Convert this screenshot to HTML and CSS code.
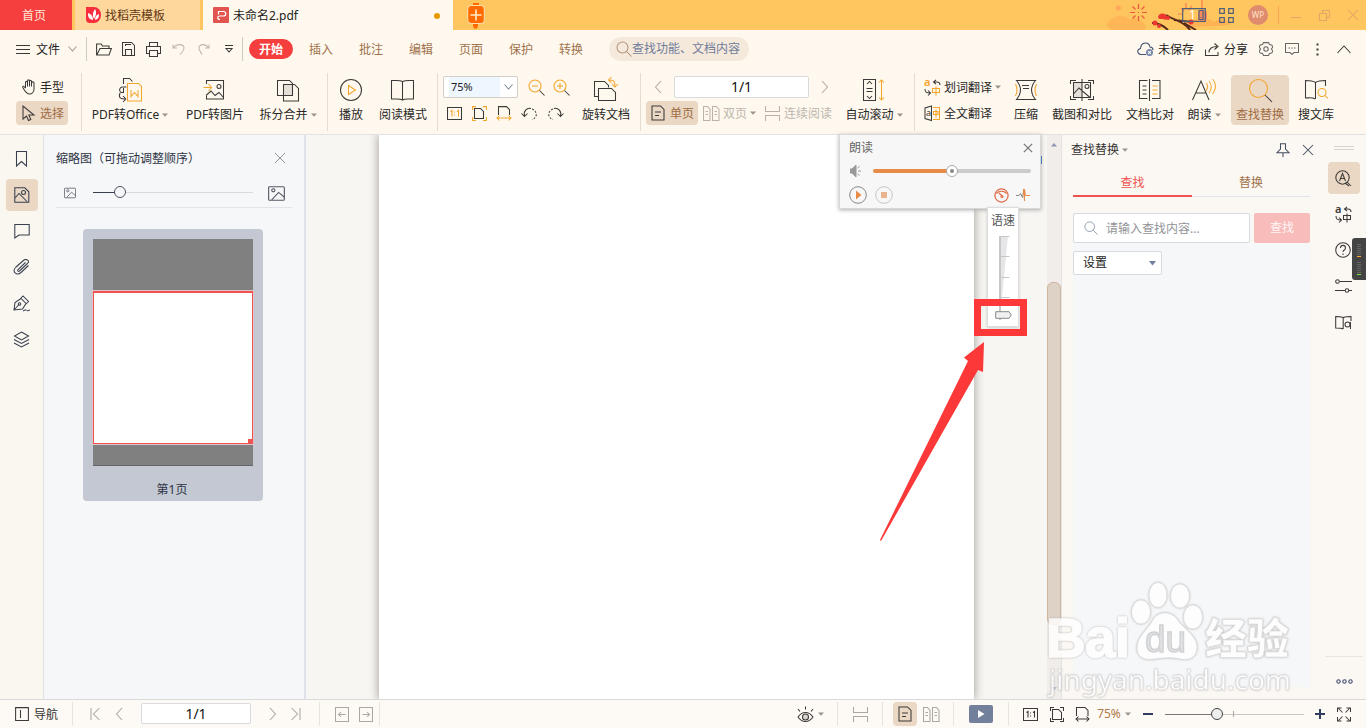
FILE: index.html
```html
<!DOCTYPE html>
<html lang="zh-CN">
<head>
<meta charset="utf-8">
<title>未命名2.pdf</title>
<link rel="stylesheet" href="styles.css">
</head>
<body>
<svg class="defs" aria-hidden="true">
  <symbol id="down" viewBox="0 0 6 4"><path d="M0 .5h6L3 3.8z" fill="#9a948c"/></symbol>
  <symbol id="doc" viewBox="0 0 14 16"><path d="M1 1h8.500l3.500 3.500V15H1zM4 7h6M4 10.500h4"/></symbol>
  <symbol id="docs" viewBox="0 0 17 15"><path d="M.5.5h4l2.500 3v11H.5zM9.500.5h4l2.500 3v11H9.500zM2.500 5.500h2.500M2.500 8.500h2.500M11.500 5.500H14M11.500 8.500H14"/></symbol>
  <symbol id="cont" viewBox="0 0 15 15"><path d="M.5 0v5.500h14V0M.5 15V9.500h14V15"/></symbol>
  <symbol id="picture" viewBox="0 0 16 14"><rect x=".6" y=".6" width="14.800" height="12.800" rx="1"/><circle cx="5" cy="4" r="1.500"/><path d="M3.500 13l6.500-7 5.500 4.500"/></symbol>
  <symbol id="left" viewBox="0 0 8 14"><path d="M7 1L1.500 7 7 13"/></symbol>
  <symbol id="right" viewBox="0 0 8 14"><path d="M1 1l5.500 6L1 13"/></symbol>
  <symbol id="close" viewBox="0 0 12 12"><path d="M1 1l10 10M11 1L1 11"/></symbol>
  <symbol id="lens" viewBox="0 0 16 16"><circle cx="6.500" cy="6.500" r="5.500"/><path d="M10.500 10.500l5 5"/></symbol>
</svg>

<header class="titlebar">
  <div class="tab home"><span>首页</span></div>
  <div class="tab template">
    <svg width="15" height="16"><path d="M0 0h8a7 8 0 0 1 0 16H4a4 4 0 0 1-4-4z" fill="#f52d3c"/><path d="M7 13C2 12 2 9 2 6c3 1 5 3 5 7zM8 12C6 8 7 5 9 2c2 3 1 7-1 10zM9 13c0-3 1-5 4-6 0 4-1 5-4 6z" fill="#fff"/></svg>
    <span>找稻壳模板</span>
  </div>
  <div class="tab current">
    <svg width="16" height="16"><rect width="16" height="16" rx="1" fill="#e25450"/><path d="M5.500 7.500V4.500h5c3 0 3 4.500 0 4.500H7c-3 0-3 3.500 0 3.500" fill="none" stroke="#fff" stroke-width="1.200"/></svg>
    <span>未命名2.pdf</span><i class="dirty"></i>
  </div>
  <svg class="newtab" width="18" height="28"><path d="M6 3h6M6 24h5" stroke="#ff6b00" stroke-width="2"/><rect x=".7" y="4.500" width="16.600" height="18" rx="3.500" fill="#ff6b00" stroke="#ffe0a8"/><path d="M9 8.500v11M3.500 14h11" stroke="#ffecc8" stroke-width="1.600"/><circle cx="8.500" cy="25.500" r="2.200" fill="#ff6b00" stroke="none"/></svg>
  <div class="festival">
    <svg width="136" height="30"><path d="M0 25c7-10 17-12 24-5 7-4 11 0 15 5 3 4 0 5-3 5H5z" fill="#ffb255" opacity=".8"/><path d="M80 28c8-12 20-12 28-6 6-4 13-3 17 2-7 3-25 1-45 4z" fill="#ffad51" opacity=".8"/><g stroke="#ed5842" stroke-width="1.200" fill="none"><path d="M32.500 4v5M32.500 16v5M24 12.500h5M36 12.500h5M26.500 6.500l3 3M35.500 15.500l3 3M38.500 6.500l-3 3M29.500 15.500l-3 3M32 12.500h1"/><path d="M9 8h7M12.500 5v6M10 5.500l5 5M15 5.500l-5 5" stroke="#ff985b" stroke-width=".8"/><path d="M75 8l3 3M80 3v5M86 6l-3 4M72 14h5M96 0v12" stroke="#ff7b50"/></g><path d="M46 23c7 0 11 2 16 7M60 15c9 6 18 6 24 15M68 20l18 2M78 23l12 7" stroke="#582b1d" stroke-width="2" fill="none"/><g fill="#eb3632"><path d="M52 17c1-5 8-4 9-1 3 2-1 5-4 3-3 0-5 0-5-2z"/><circle cx="62" cy="18" r="2"/><circle cx="49" cy="23" r="2.500"/><circle cx="85" cy="22" r="2.500"/><circle cx="53" cy="26" r="2"/></g><rect x="92" y="10" width="9" height="11" rx="4" fill="#ff8a5c"/></svg>
  </div>
  <div class="windowbox"><span>1</span><svg width="24" height="14"><path d="M.7.7h22.600v12.600H.7zM17 2.500h4v9h-4zM18.500 9.500h1"/></svg></div>
  <svg class="apps" width="15" height="15"><path d="M.7.7h4.600v4.600H.7zM9.700.7h4.600v4.600H9.700zM.7 9.700h4.600v4.600H.7zM9.700 9.700h4.600v4.600H9.700z"/></svg>
  <div class="avatar">WP</div><i class="tline"></i>
  <svg class="wmin" width="10" height="12"><path d="M0 8.500h10"/></svg>
  <svg class="wrest" width="11" height="12"><path d="M.5 4.500h7v7h-7zM3.500 4V1.500h7v7H8"/></svg>
  <svg class="wclose" width="12" height="12"><use href="#close"/></svg>
</header>

<nav class="menubar">
  <div class="file"><svg width="14" height="11"><path d="M0 1.500h14M0 5.500h14M0 9.500h14"/></svg><span>文件</span><svg class="muted" width="9" height="6"><path d="M.5.5l4 4.500 4-4.500"/></svg></div>
  <i class="vline"></i>
  <svg width="16" height="13"><path d="M.6 12V1h4.500l1.400 2h6.500v2.500M.8 12L4 5.500h11.400L13 12z"/></svg>
  <svg width="13" height="14"><path d="M.5.5h9l3 3v10H.5zM3.500 4V2.500H9M3.500 13V7.500h6V13"/></svg>
  <svg width="15" height="15"><path d="M3.500 4.500v-4h8v4M3.500 11.500h-3v-7h14v7h-3M3.500 8.500h8v6h-8z"/></svg>
  <svg class="faint" width="13" height="12"><path d="M1 1.500V5h4M1.500 5C4 .5 12 .5 12 5c0 3-2 4-4 6.500"/></svg>
  <svg class="faint" width="12" height="12"><path d="M11 1.500V5H7M10.500 5C8 .5 1 .5 1 5c0 3 2 4 3 6.500"/></svg>
  <svg width="8" height="8"><path d="M0 .5h8M1 3.500l3 3.500 3-3.500z"/></svg>
  <i class="vline start"></i>
  <b class="pill">开始</b>
  <span>插入</span><span>批注</span><span>编辑</span><span>页面</span><span>保护</span><span>转换</span>
  <div class="cmdsearch"><svg width="16" height="16"><use href="#lens"/></svg>查找功能、文档内容</div>
  <em></em>
  <div class="pair cloud"><svg width="17" height="14"><path d="M9 12.500H4c-4-.5-4.500-5-.5-6C4-.5 12-.5 13 5c2 .2 3 1.500 3 3" stroke="#405070"/><circle cx="12.500" cy="10.500" r="3.500" fill="#7888a8" stroke="none"/><path d="M11.200 9.200l2.600 2.600M13.800 9.200l-2.600 2.600" stroke="#fff"/></svg><span>未保存</span></div>
  <div class="pair share"><svg width="15" height="13"><path d="M.5 6.500v6h12.500V9M4 9.500c0-4 3-6 8-6M9.500.5l3.500 3-3.500 3"/></svg><span>分享</span></div>
  <svg width="14" height="14"><path d="M4.500.6h5l1 2 2.300.4 1 2-1.400 2 1.400 2-1 2-2.300.4-1 2h-5l-1-2-2.300-.4-1-2L1.600 7 .2 5l1-2 2.300-.4z" stroke="#666"/><circle cx="7" cy="7" r="2.200" stroke="#666"/></svg>
  <svg width="14" height="12"><path d="M.5.5h13v9H9l-2 1.900-2-1.900H.5zM3.500 5h1.500M6.300 5H7.700M9 5h1.500" stroke="#666"/></svg>
  <svg width="3" height="13"><path d="M1.500 .5v2M1.500 5.500v2M1.500 10.500v2" stroke-width="2"/></svg>
  <svg width="14" height="9"><path d="M.5 8L7 1l6.500 7"/></svg>
</nav>

<section class="toolbar">
  <div class="modes">
    <div><svg width="14" height="16"><path d="M3.500 9V3.500c0-1.500 2-1.500 2 0V7.500M5.500 7V2c0-1.500 2-1.500 2 0v5.500M7.500 7V2.500c0-1.500 2-1.500 2 0v5M9.500 7.500V4c0-1.500 2.500-1.500 2.500 0v6c0 3-2 5-4.500 5C4 15 3 12 .8 8.500c-.5-1.500 1-1.500 1.700-.5l1 1.200"/></svg><span>手型</span></div>
    <div class="on"><svg width="14" height="17"><path d="M1 1v13l3.500-3 2 4.500 2.300-1-2-4.500H12z"/></svg><span>选择</span></div>
  </div>
  <i class="bar edge"></i>
  <div class="big"><svg width="26" height="28"><path d="M6.500 8V2.500h6l3 3M15 11H5a3 3 0 0 0-1 5.500h2.500V12M3 17c-2 5 1 6 5 6M6 20l3 3-3 3"/><path d="M9.500 7.500h12l3 3v15h-15z" fill="#fff8ee" stroke="none"/><path class="o" d="M10.500 7.500h11l3 3v14.500h-14zM14 14v6.500l3.500-4 3.500 4V14"/></svg><span>PDF转Office<svg class="dn"><use href="#down"/></svg></span></div>
  <div class="big"><svg width="26" height="28"><path d="M4.500 8V4.500h17v18.500h-17v-3M4 19.500l5-4.500 4 4.500 4-3 4.500 5"/><circle cx="17" cy="10.500" r="2"/><path class="o" d="M1.500 11.500h8M6.500 8l3 3.500-3 3.500"/></svg><span>PDF转图片</span></div>
  <div class="big"><svg width="26" height="28"><path d="M8.500 8.500h9v11h-9z" fill="#e6dfd7" stroke="none"/><path d="M2.500 4.500h12l3 3v12h-15zM8.500 8.500h11l4 4V25h-15z"/></svg><span>拆分合并<svg class="dn"><use href="#down"/></svg></span></div>
  <i class="bar"></i>
  <div class="big"><svg width="26" height="28"><circle cx="13" cy="14" r="10.500"/><path class="o" d="M10.500 9.500v9l7-4.500z"/></svg><span>播放</span></div>
  <div class="big"><svg width="26" height="28"><path d="M12.500 5.500v18M12.500 24c-2-1.500-3-1-11-1V4.500c6 0 8.500-.5 11 1 2.500-1.500 6-1 11-1V23c-8 0-9-.5-11 1z"/></svg><span>阅读模式</span></div>
  <i class="bar"></i>
  <div class="zoomgroup">
    <div class="zrow"><div class="combo"><span>75%</span><svg width="9" height="6"><path d="M.5.5l4 4.500 4-4.500"/></svg></div>
      <svg width="17" height="17"><circle class="o" cx="7" cy="7" r="6"/><path class="o" d="M4 7h6"/><path d="M11.500 11.500l5 5"/></svg>
      <svg width="17" height="17"><circle class="o" cx="7" cy="7" r="6"/><path class="o" d="M4 7h6M7 4v6"/><path d="M11.500 11.500l5 5"/></svg></div>
    <div class="zicons">
      <svg width="16" height="14"><path d="M.5.5h14v12H.5z"/><path class="o" d="M3.500 4.500l1.500-1v6M7.500 4.500v1M7.500 7.500v1M10 4.500l1.500-1v6"/></svg>
      <svg width="15" height="15"><path d="M2.500 2.500h6l3 3v7h-9z"/><path class="o" d="M.6 4V.6H4M11 .6h3.400V4M.6 11v3.400H4M11 14.400h3.400V11"/></svg>
      <svg width="16" height="15"><path d="M2.500 9V.6h8l3 3V9"/><path class="o" d="M1 12h14M3.500 9.500L1 12l2.500 2.500M12.500 9.500L15 12l-2.500 2.500"/></svg>
      <svg width="17" height="14"><path d="M3.500 9C2 4 6 .6 10 1.500M.5 6.500l3 3 3-3"/><path d="M11 2c3 1 5 4 4 7-1 2-2 3-4 3.500" stroke-dasharray="2 1.500"/></svg>
      <svg width="17" height="14"><path d="M13.500 9C15 4 11 .6 7 1.500M16.500 6.500l-3 3-3-3"/><path d="M6 2C3 3 1 6 2 9c1 2 2 3 4 3.500" stroke-dasharray="2 1.500"/></svg>
    </div>
  </div>
  <div class="big"><svg width="26" height="28"><path d="M5.500 20.500h-4V5.500h10l4 4v2M5.500 12.500h13l4 4v8h-17z"/><path class="o" d="M18.500 1l-3 3 3 3M16 4c5 0 6 1 6 6M19 8l3 3 3-3"/></svg><span>旋转文档</span></div>
  <i class="bar"></i>
  <div class="pages">
    <div class="prow"><svg width="8" height="14"><use href="#left"/></svg><div class="pageno">1/1</div><svg width="8" height="14"><use href="#right"/></svg></div>
    <div class="views"><div class="on"><svg width="14" height="16"><use href="#doc"/></svg><span>单页</span></div><div class="off"><svg width="17" height="15"><use href="#docs"/></svg><span>双页</span><svg class="dn"><use href="#down"/></svg></div><div class="off"><svg width="15" height="15"><use href="#cont"/></svg><span>连续阅读</span></div></div>
  </div>
  <div class="big"><svg width="26" height="28"><path d="M2.500 3.500h12v21h-12zM6 8l2.500-2.500L11 8M6 20l2.500 2.500L11 20" /><path d="M5.500 12.500h6M5.500 15.500h6"/><path class="o" d="M20.500 4v20M18 6.500L20.500 4 23 6.500M18 21.500l2.500 2.500 2.500-2.500"/></svg><span>自动滚动<svg class="dn"><use href="#down"/></svg></span></div>
  <i class="bar"></i>
  <div class="translate">
    <div><svg width="17" height="18" viewBox="0 -1 17 18"><text x="0" y="7" class="oa">a</text><path d="M10 3h3c2 0 3 1 3 3M12 .8L9.500 3 12 5.200M1 10c0 3 1 4 5 4M4 11.500L6.500 14 4 16.500"/><path class="o" d="M8.500 9.500h7v4h-7zM12 7.500v9"/></svg><span>划词翻译</span><svg class="dn"><use href="#down"/></svg></div>
    <div><svg width="17" height="17"><path d="M7.500 1L1 3v10.500l6.500 2z"/><text x="2" y="11" class="sa">a</text><path class="o" d="M9 2.500h6.500v12H9M9.500 6.500H14v3H9.500zM12 4.500v8"/></svg><span>全文翻译</span></div>
  </div>
  <div class="big"><svg width="26" height="28"><path d="M3.500 4.500h19c-5 6-5 13 0 19h-19c5-6 5-13 0-19zM9 9.500h7M10 12.500h6"/><path class="o" d="M2.500 8c2 4 2 8 0 12M23.500 8c-2 4-2 8 0 12"/></svg><span>压缩</span></div>
  <div class="big"><svg width="26" height="28"><path d="M4 7h9v14H4z" fill="#e6dfd7" stroke="none"/><path d="M4.500 6.500h17v15h-17zM1.500 8V4.500H7M19 4.500h5.500V8M1.500 20v3.500H7M19 23.500h5.500V20M13 3v22M4.500 18l5.500-6 11 9.500"/><circle cx="18" cy="10.500" r="2"/></svg><span>截图和对比</span></div>
  <div class="big"><svg width="26" height="28"><path d="M12.500 3v22M10.500 4.500h-8v18h8M15 4.500h8v18h-8M5.500 10h4M5.500 14h4M5.500 18h4"/><path class="o" d="M15.500 10h5M15.500 14h5M15.500 18h5"/></svg><span>文档比对</span></div>
  <div class="big"><svg width="26" height="28"><path d="M1.500 24L10 5l8 19M5 17h10"/><path class="o" d="M15 7c2 2 2 5 0 8M18 5c3 3 3 8 0 12M21.500 3c4 4 4 10 0 15"/></svg><span>朗读<svg class="dn"><use href="#down"/></svg></span></div>
  <div class="big picked"><svg width="26" height="28"><circle class="o" cx="11.500" cy="12.500" r="9"/><path d="M18 19l7 7"/></svg><span>查找替换</span></div>
  <div class="big"><svg width="26" height="28"><path d="M12 23c-3-2-6-1-9.500-1V4.500c4 0 7 0 10 2 3-2 6-2 10-2V10M12.500 6.500V23"/><circle class="o" cx="19" cy="16.500" r="4"/><path class="o" d="M22 19.500l3 3"/></svg><span>搜文库</span></div>
</section>

<main class="work">
  <aside class="rail">
    <button><svg width="13" height="18"><path d="M1.500 1.500h10V16l-5-4.500-5 4.500z"/></svg></button>
    <button class="sel"><svg width="16" height="16"><path d="M.8.8h10l4 4v10.400H.8zM1 11l4-4.500 8 8"/><circle cx="9.500" cy="5.500" r="2"/></svg></button>
    <button><svg width="16" height="16"><path d="M.8 1.500h14.400v10.500H5l-4.200 3z"/></svg></button>
    <button><svg width="17" height="16"><path d="M12.500 3.500l-7.500 7c-1 1.500.5 2.500 1.500 1.500l8-7.500c3-3-1.500-5-3.500-3.500L3 8c-5 5 1 9 5 5.500l7.500-7"/></svg></button>
    <button><svg width="17" height="17"><path d="M1 15L2 7.500l6-4 5 5-3.500 5.500zM7.500 3.500L10 1l5.500 5.500-2.500 2.500M1 15l5-5.500M10 15.500c1.500 1 2-1.500 3-.5s2 1 4 0"/><circle cx="6.500" cy="9" r="1.300"/></svg></button>
    <button><svg width="17" height="17"><path d="M8.500 1l7 4-7 4-7-4zM1 8.500l7.500 4 7.500-4M1 12l7.500 4 7.500-4"/></svg></button>
  </aside>
  <aside class="thumbs">
    <div class="thead"><span>缩略图（可拖动调整顺序）</span><svg width="12" height="12"><use href="#close"/></svg></div>
    <div class="tsize"><svg width="12" height="12"><use href="#picture"/></svg><div class="range"><i></i><b></b></div><svg width="17" height="15"><use href="#picture"/></svg></div>
    <div class="card"><div class="shot"><div class="view"><i></i></div></div><p>第1页</p></div>
  </aside>
  <section class="canvas">
    <div class="paper"></div>
    <div class="vscroll"><svg width="6" height="4"><path d="M0 3.500h6L3 0z" fill="#8b97b2"/></svg><i></i><svg class="end" width="6" height="4"><path d="M0 0h6L3 3.500z" fill="#b4bccd"/></svg></div>
  </section>
  <aside class="finder">
    <div class="fhead"><span>查找替换</span><svg class="dn"><use href="#down"/></svg><svg class="pin" width="14" height="14"><path d="M4 .7h6M4.500 1v5L1 9.700h12L9.500 6V1M7 10v4"/></svg><svg width="12" height="12"><use href="#close"/></svg></div>
    <div class="ftabs"><span class="cur">查找</span><span>替换</span></div>
    <div class="ffield"><div class="finput"><svg width="14" height="14" viewBox="0 0 16 16"><use href="#lens"/></svg><span>请输入查找内容...</span></div><button>查找</button></div>
    <div class="fbody"><div class="select"><span>设置</span><svg width="7" height="5"><path d="M0 0h7L3.500 4.500z" fill="#6f7f9f"/></svg></div></div>
  </aside>
  <aside class="tools">
    <i class="grip"></i>
    <button class="sel"><svg width="17" height="17"><circle cx="7.500" cy="7.500" r="6.700"/><path d="M4.500 11l3-7.500 3 7.500M5.500 8.500h4M12 12l4 4M10 13l4 3"/></svg></button>
    <button><svg width="17" height="18" viewBox="0 -1 17 18"><text x="0" y="7" class="da">a</text><path d="M10 3h3c2 0 3 1 3 3M12 .8L9.500 3 12 5.200M1 10c0 3 1 4 5 4M4 11.500L6.500 14 4 16.500M8.500 9.500h7v4h-7zM12 7.500v9"/></svg></button>
    <button><svg width="17" height="16"><circle cx="8" cy="8" r="7.300"/><path d="M5.500 6c0-3.500 5-3.500 5 0 0 2-2.500 2-2.500 4M8 11.500V13"/></svg></button>
    <button><svg width="17" height="14"><circle cx="2.500" cy="2.500" r="1.800"/><path d="M4.500 2.500H17M0 11.500h10M14 11.500h3"/><circle cx="12" cy="11.500" r="1.800"/></svg></button>
    <button><svg width="17" height="15"><path d="M8 14c-2-1-4-1-7.300-1V1.500c3 0 5 0 7.500 1 2.500-1 4-1 7.800-1V6M8.200 2.500V14"/><circle cx="12.500" cy="9.500" r="2.500"/><path d="M15.500 7v7"/></svg></button>
    <div class="more"><svg width="17" height="5"><circle cx="2.500" cy="2.500" r="1.700"/><circle cx="8.500" cy="2.500" r="1.700"/><circle cx="14.500" cy="2.500" r="1.700"/></svg></div>
  </aside>
</main>

<footer class="status">
  <div class="navbtn"><svg width="14" height="14"><path d="M.6.6h12.800v12.800H.6zM5.500 3v8"/></svg><span>导航</span></div>
  <i class="sl first"></i>
  <svg class="g" width="10" height="14"><path d="M1 1v12M9.500 1L3.500 7l6 6"/></svg>
  <svg class="g" width="8" height="14"><use href="#left"/></svg>
  <div class="pageno">1/1</div>
  <svg class="g" width="8" height="14"><use href="#right"/></svg>
  <svg class="g" width="10" height="14"><path d="M9 1v12M.5 1l6 6-6 6"/></svg>
  <i class="sl"></i>
  <svg class="g" width="14" height="15"><path d="M.5.5h13v14H.5zM10.500 7.500h-7M6 5L3.500 7.500 6 10"/></svg>
  <svg class="g" width="14" height="15"><path d="M.5.5h13v14H.5zM3.500 7.500h7M8 5l2.500 2.500L8 10"/></svg>
  <i class="sl"></i><em></em>
  <div class="eye"><svg width="17" height="17"><path d="M1 11c4-6 11-6 15 0-4 6-11 6-15 0zM1 3l2 2.500M8.500.5v3M16 3l-2 2.500"/><circle cx="8.500" cy="11" r="3" fill="#d9d4cc"/></svg><svg class="dn"><use href="#down"/></svg></div>
  <i class="sl"></i>
  <svg class="g" width="15" height="15"><use href="#cont"/></svg>
  <i class="sl"></i>
  <div class="sq"><svg width="14" height="16"><use href="#doc"/></svg></div>
  <svg class="g" width="17" height="15"><use href="#docs"/></svg>
  <i class="sl"></i>
  <div class="play"><svg width="7" height="8"><path d="M0 0l6.500 4L0 8z"/></svg></div>
  <i class="sl"></i>
  <svg width="15" height="13"><path d="M.5.5h14v12H.5zM3.500 4.500L5 3.500v6M7.500 4.500v1M7.500 7.500v1M10 4.500l1.500-1v6"/></svg>
  <svg width="14" height="15"><path d="M2.500 2.500h6l3 3v7h-9zM.5 4V.5H4M10 .5h3.500V4M.5 11v3.500H4M10 14.500h3.500V11"/></svg>
  <svg width="15" height="15"><path d="M1.500 9V.5h8.500l3 3V9M1 12h13M3.500 9.500L1 12l2.500 2.500M11.500 9.500L14 12l-2.500 2.500"/></svg>
  <div class="pct">75%<svg class="dn"><use href="#down"/></svg></div>
  <svg class="bold" width="10" height="11"><path d="M0 5h10"/></svg>
  <div class="zoombar"><i></i><u></u><b></b></div>
  <svg class="bold" width="10" height="11"><path d="M0 5h10M5 0v10"/></svg>
  <svg width="14" height="15"><path d="M5.500 5.500l-4-4M.5 5V1h4M8.500 5.500l4-4M9.500 1h4v4M5.500 9.500l-4 4M.5 10v4h4M8.500 9.500l4 4M13.500 10v4h-4"/></svg>
</footer>

<div class="reader">
  <div class="rhead"><span>朗读</span><svg width="10" height="10" viewBox="0 0 12 12"><use href="#close"/></svg></div>
  <div class="volume"><svg width="11" height="12"><path d="M0 4h2l4-4v12L2 8H0z" fill="#999"/><path d="M7.500 3l2-1.500M8 6h3M7.500 9l2 1.500"/></svg><div class="vol"><i></i><b></b></div></div>
  <div class="rctl"><svg width="18" height="18"><circle cx="9" cy="9" r="8.300"/><path d="M7 4.500v9L12.500 9z" fill="#e98b48" stroke="none"/></svg><svg class="stop" width="18" height="18"><circle cx="9" cy="9" r="8.300"/><path d="M6 6h6v6H6z" fill="#e8b48f" stroke="none"/></svg>
  <svg class="gauge" width="15" height="15"><circle cx="7.500" cy="7.500" r="6.600"/><path d="M2.500 5.500C5 2.500 10 2.500 12.500 5.500M8 8L5 5"/><circle cx="8" cy="8.500" r="1"/></svg><svg width="15" height="14"><path d="M0 7.500h3l1.500-2 2 4 1-6"/><path d="M7.500 6V1l1 12V1l1 6.500H14" stroke="#e98b48"/></svg></div>
</div>
<div class="speed"><span>语速</span><svg width="30" height="88"><path d="M12 2h8l-7 72z" fill="#e6e6e8" stroke="none"/><path d="M12 2v84" stroke="#c7c7c7" stroke-width="2"/><path d="M11 2.500h10.500M12 22.500h9.500M12 43.500h9.500M12 63.500h9.500" stroke="#c7c7c7"/><path d="M7.700 77.700h13.300l2.300 3.300-2.300 3.300H7.700z" fill="#f0f0f0" stroke="#888"/></svg></div>
<i class="bluehint"></i>
<div class="mark"></div>
<svg class="arrow" width="110" height="205"><path d="M0 203L88 24l-4-3.500L104 5l-1 30-5-2L1 204z" fill="#fc3838"/></svg>
<div class="meter"><i></i><i></i></div>

<div class="watermark">
  <svg width="256" height="128" viewBox="1042 574 256 128">
    <g class="wm">
      <text x="1046" y="657" class="wbai" textLength="84">Bai</text>
      <ellipse cx="1141" cy="612" rx="9.500" ry="12"/><ellipse cx="1158" cy="595" rx="9" ry="12.500"/><ellipse cx="1180" cy="596" rx="9.500" ry="12"/><ellipse cx="1193" cy="617" rx="9.500" ry="12"/>
      <path d="M1154 618c6-7 17-7 23 1 6 10 20 16 20 28 0 10-7 14-17 12-9-2-17-1-25 0-11 2-18-2-18-11 0-12 11-18 17-30z"/>
      <text x="1145" y="652" class="wdu" textLength="41" lengthAdjust="spacingAndGlyphs">du</text>
      <text x="1205" y="654" class="wjy">经验</text>
      <text x="1049" y="690" class="wurl" textLength="242">jingyan.baidu.com</text>
    </g>
  </svg>
</div>
</body>
</html>
```
FILE: styles.css
```css
* { box-sizing: border-box; }
body { margin: 0; width: 1366px; height: 728px; overflow: hidden; position: relative; display: grid; grid-template-rows: 30px 38px 67px 564px 29px; font: 12px/16px "Noto Sans", "Noto Sans CJK SC", sans-serif; color: #333; background: #fff8ee; }
svg { display: block; flex: none; fill: none; stroke: #3c3a38; stroke-width: 1.05; }
i, em, b, u { font-style: normal; text-decoration: none; }
button { border: 0; padding: 0; background: none; font: inherit; }
span { white-space: nowrap; }
.defs { position: absolute; width: 0; height: 0; }
.dn { width: 6px; height: 4px; stroke: none; }
.o { stroke: #f3a52c; fill: none; }
.oa, .da, .sa { font: 11px "Noto Sans", sans-serif; stroke: none; fill: #f3a52c; }
.oa, .da { font-weight: 600; }
.da { fill: #3c3a38; }
.sa { font-size: 9px; fill: #333; }

/* title bar */
.titlebar { display: flex; align-items: center; background: #ffc55f; }
.tab { height: 30px; display: flex; align-items: center; }
.tab svg { stroke: none; }
.tab span { padding-top: 2px; }
.home { width: 72px; justify-content: center; padding-right: 4px; background: #f53f3f; color: #ffe9d6; }
.template { width: 125px; margin: 0 3px; padding-left: 11px; gap: 4px; background: #fdd79c; color: #633816; }
.current { width: 250px; padding-left: 10px; gap: 4px; background: #fff8ee; color: #222; }
.dirty { width: 6px; height: 6px; border-radius: 50%; background: #e69a00; margin: 2px 13px 0 auto; }
.newtab { margin-left: 14px; }
.festival { width: 76px; height: 30px; margin-left: 621px; }
.festival svg { stroke: none; }
.windowbox { position: relative; width: 24px; }
.windowbox span { position: absolute; left: 7px; top: -1px; color: #fff; }
.windowbox svg, .apps { stroke: #506078; stroke-width: 1.2; }
.apps { margin-left: 13px; }
.avatar { width: 20px; height: 20px; margin-left: 14px; border-radius: 50%; background: #df8b6d; color: #ffe4cd; font-size: 8px; line-height: 20px; text-align: center; }
.tline { width: 1px; height: 18px; background: #ffa25b; margin-left: 10px; }
.wmin, .wrest, .wclose { stroke: #dfa765; }
.wmin { margin-left: 12px; }
.wrest { margin-left: 18px; }
.wclose { margin-left: 17px; }

/* menu */
.menubar { display: grid; grid-template-columns: 80px 13px 22px 27px 23px 27px 24px 26px 4px 50px repeat(6, 50px) 166px 1fr 68px 53px 26px 26px 25px 28px 8px; align-items: center; justify-items: center; color: #a0724c; }
.menubar span { padding-top: 2px; }
.file { width: 80px; padding-left: 16px; display: flex; align-items: center; color: #222; }
.file span { margin: 0 8px 0 6px; }
.muted { stroke: #a09a92; }
.faint { stroke: #bdb7af; }
.vline { width: 1px; height: 24px; background: #cfcac2; }
.vline.start { justify-self: start; }
.pill { width: 44px; height: 20px; line-height: 21px; text-align: center; border-radius: 10px; background: #f53f3f; color: #fff; }
.cmdsearch { width: 140px; height: 24px; border-radius: 12px; background: #f5e9dc; color: #707c9a; display: flex; align-items: center; padding-left: 7px; white-space: nowrap; }
.cmdsearch svg { stroke: #b2967c; }
.pair { display: flex; align-items: center; gap: 4px; color: #222; }
.cloud { padding-right: 1px; }

/* toolbar */
.toolbar { display: grid; grid-template-columns: 81px 1px 96px 74px 72px 7px 40px 64px 5px 135px 62px 7px 194px 72px 9px 87px 40px 72px 64px 44px 68px 44px 1fr; justify-items: center; padding-top: 6px; border-bottom: 1px solid #e2e2e2; color: #282828; }
.bar { width: 1px; height: 58px; background: #e2dcd3; margin-top: -1px; }
.big { height: 50px; margin-top: 1px; padding-top: 1px; display: flex; flex-direction: column; align-items: center; }
.big > span { display: flex; align-items: center; gap: 3px; height: 20px; line-height: 20px; margin-top: 1px; }
.picked { width: 58px; border-radius: 4px; background: #ead7c4; color: #9e6c43; }
.modes { width: 81px; padding: 1px 0 0 16px; }
.modes div { display: flex; align-items: center; width: 52px; height: 24px; gap: 4px; padding-left: 6px; border-radius: 4px; }
.modes span, .views span, .translate span { padding-top: 2px; }
.modes .on { margin-top: 2px; }
.modes div.on, .views .on { background: #ead7c4; color: #9e6c43; }
.zoomgroup { width: 135px; padding: 2px 0 0 3px; }
.zrow { display: flex; align-items: center; height: 22px; }
.combo { width: 75px; height: 22px; border: 1px solid #d3cec8; border-radius: 2px; background: linear-gradient(90deg, #fff 5px, #eef6ff 5px 56px, #fff 56px); display: flex; align-items: center; justify-content: space-between; padding: 0 4px 0 7px; font-size: 11px; color: #222; margin-right: 10px; }
.combo svg { stroke: #7d869b; }
.zrow > svg + svg { margin-left: 8px; }
.zicons { display: flex; align-items: center; gap: 9px; margin: 8px 0 0 4px; height: 15px; }
.pages { width: 194px; padding: 2px 0 0 2px; }
.prow { display: flex; align-items: center; padding-left: 8px; gap: 12px; }
.prow svg { stroke: #b1aaa2; }
.pageno { width: 135px; height: 22px; border: 1px solid #d9dadd; border-radius: 2px; background: #fff; color: #111; font-size: 14px; line-height: 20px; text-align: center; }
.views { display: flex; margin-top: 3px; height: 24px; }
.views div { display: flex; align-items: center; }
.views .on { width: 52px; padding-left: 5px; gap: 5px; border-radius: 4px; }
.views .off { color: #bcb6ae; margin-left: 5px; gap: 3px; }
.views .off + .off { margin-left: 9px; gap: 4px; }
.off svg { stroke: #b9b3ab; }
.off .dn { stroke: none; }
.translate { width: 87px; padding: 2px 0 0 5px; }
.translate div { display: flex; align-items: center; gap: 3px; height: 22px; margin-bottom: 4px; }

/* workspace */
.work { display: grid; grid-template-columns: 44px 262px 756px 263px 41px; min-height: 0; }
.rail { background: #faf6f0; border-right: 1px solid #e1e2e6; padding: 8px 5px 0 6px; display: flex; flex-direction: column; gap: 4px; }
.rail button, .tools button { width: 32px; height: 32px; display: grid; place-items: center; border-radius: 4px; }
.rail svg { stroke: #38404f; }
.rail svg[width="17"], .rail svg[width="13"], .tools button svg { margin-right: 1px; }
.rail .sel, .tools .sel { background: #ead7c4; }
.thumbs { background: #f6f7f9; border-right: 2px solid #dfe2ea; padding: 13px 12px 0; color: #2d3445; }
.thead { height: 20px; display: flex; align-items: center; justify-content: space-between; padding-right: 6px; }
.thead span { padding-top: 2px; }
.thead svg { stroke: #8e949f; stroke-width: 1; }
.tsize { height: 40px; display: flex; align-items: center; padding: 11px 7px 0 8px; border-bottom: 1px solid #e1e4e8; }
.tsize svg { stroke: #555a63; }
.range { flex: none; width: 160px; height: 14px; margin: 0 15px 0 17px; background: linear-gradient(#d8dadd, #d8dadd) 0 6px / 100% 1px no-repeat; position: relative; }
.range i { display: block; width: 23px; height: 1px; margin-top: 6px; background: #38404f; }
.range b { position: absolute; left: 21px; top: 0; width: 12px; height: 12px; border: 1px solid #4b5362; border-radius: 50%; background: #f6f7f9; }
.card { width: 180px; height: 272px; margin: 21px 0 0 27px; padding: 10px; border-radius: 4px; background: #c4c8d3; }
.shot { height: 227px; padding-top: 52px; background: #808080; border-bottom: 1px solid #64656b; }
.view { height: 153px; border: 1px solid #ef5350; border-top-width: 2px; outline: 1px solid #ddc4c9; background: #fff; display: flex; align-items: end; justify-content: end; }
.view i { width: 4px; height: 4px; background: #ef5350; }
.card p { margin: 15px 2px 0 0; text-align: center; padding-top: 1px; }
.canvas { display: flex; background: #f8f6f2; overflow: hidden; }
.paper { width: 595px; margin-left: 73px; background: #fff; box-shadow: 0 0 9px 1px #aaa7a2; }
.vscroll { width: 15px; margin-left: auto; background: #f1edea; border-right: 1px solid #e5e3e3; display: flex; flex-direction: column; align-items: center; padding-top: 8px; }
.vscroll svg { stroke: none; }
.vscroll .end { margin-top: 62px; }
.vscroll i { width: 14px; height: 343px; margin-top: 135px; border: 1px solid #cfb59d; border-radius: 6px; background: #ded2c6; }
.finder { padding: 6px 15px 12px 11px; background: #fbf7f2; display: flex; flex-direction: column; }
.fhead { display: flex; align-items: center; height: 17px; gap: 3px; margin: 0 -4px 0 -2px; }
.fhead span, .finput span { padding-top: 1px; }
.fhead svg:not(.dn) { stroke: #444d61; }
.fhead .pin { margin-left: auto; margin-right: 9px; }
.ftabs { display: grid; grid-template-columns: 119px 118px; height: 39px; color: #a0724c; text-align: center; }
.ftabs span { padding-top: 17px; border-bottom: 1px solid #e1e4ea; }
.ftabs .cur { color: #ef5350; border-bottom: 2px solid #ef5350; }
.ffield { display: flex; gap: 4px; margin-top: 16px; height: 30px; }
.finput { width: 177px; border: 1px solid #d6dae2; border-radius: 2px; background: #fff; display: flex; align-items: center; padding-left: 10px; gap: 8px; color: #929397; }
.finput svg { stroke: #8d97ad; }
.ffield button { width: 56px; border-radius: 2px; background: #f8bcbb; color: #fff7f7; }
.fbody { flex: 1; width: 237px; padding-top: 8px; background: #f6f7f9; }
.select { width: 89px; height: 24px; border: 1px solid #d6dae2; border-radius: 2px; background: #fff; display: flex; align-items: center; justify-content: space-between; padding: 0 5px 0 9px; color: #222; }
.select svg { stroke: none; }
.tools { background: #fbf7f2; padding: 11px 0 0 3px; display: flex; flex-direction: column; gap: 4px; }
.tools .grip { width: 20px; height: 4px; margin: 0 0 8px 6px; border: solid #d5d2ce; border-width: 1px 0; }
.more { margin: auto 0 0 -3px; width: 38px; height: 43px; border-top: 1px solid #e8e4df; padding: 22px 0 0 11px; }
.more svg { stroke: #38426a; }

/* status bar */
.status { display: grid; grid-template-columns: 72px 11px 24px 24px 130px 24px 22px 24px 22px 26px 1px 1fr 40px 15px 30px 15px 30px 22px 23px 32px 22px 23px 30px 21px 42px 26px 147px 24px 24px 10px; align-items: center; justify-items: center; border-top: 1px solid #d9d9dc; background: #fdf9f4; }
.navbtn { width: 72px; padding-left: 15px; display: flex; align-items: center; gap: 5px; }
.navbtn span { padding-top: 1px; }
.sl { width: 1px; height: 24px; background: #e8e4de; }
.sl.first { justify-self: start; }
.g { stroke: #aaa6a0; }
.status .pageno { width: 110px; height: 21px; line-height: 19px; margin-bottom: 1px; }
.eye, .pct { display: flex; align-items: center; gap: 4px; }
.pct { color: #b07c4b; }
.sq { width: 24px; height: 24px; border-radius: 4px; background: #ead7c4; display: grid; place-items: center; }
.play { width: 24px; height: 18px; border-radius: 2px; background: #73809c; display: grid; place-items: center; }
.play svg { fill: #fff; stroke: none; }
.bold { stroke: #303c60; stroke-width: 2; }
.zoombar { width: 139px; height: 12px; position: relative; background: linear-gradient(90deg, #777 50px, #c9c6c2 50px) 0 6px / 100% 1px no-repeat; }
.zoombar b { position: absolute; left: 46px; top: 0; width: 12px; height: 12px; border: 1px solid #444; border-radius: 50%; background: #eee; }
.zoombar u { position: absolute; left: 68px; top: 3px; width: 1px; height: 6px; background: #aaa; }

/* overlays */
.reader { position: absolute; left: 839px; top: 134px; width: 202px; height: 75px; padding: 5px 9px 0 9px; background: #f7f7f7; border: 1px solid #d8d8d8; box-shadow: 0 1px 4px #aaa; color: #666; }
.rhead { display: flex; justify-content: space-between; height: 16px; align-items: center; }
.rhead svg { stroke: #777; stroke-width: 1.5; margin: -1px -2px 0 0; }
.volume { height: 28px; padding-top: 2px; display: flex; align-items: center; gap: 12px; padding-left: 1px; }
.volume svg { stroke: #999; stroke-width: 1; }
.vol { position: relative; width: 159px; height: 4px; border-radius: 2px; background: linear-gradient(90deg, #e98b48 78px, #cbcbcb 78px); }
.vol i { position: absolute; left: 73px; top: -4px; width: 12px; height: 12px; border: 1px solid #aaa; border-radius: 50%; background: #fff; }
.vol b { position: absolute; left: 77px; top: 0; width: 4px; height: 4px; border-radius: 50%; background: #888; }
.rctl { display: flex; align-items: center; gap: 8px; margin-top: 2px; }
.rctl svg { stroke: #888; stroke-width: 1; }
.rctl .stop { stroke: #c5c5ca; }
.rctl .gauge { stroke: #e06a43; margin-left: auto; margin-right: -1px; stroke-width: 1.2; }
.speed { position: absolute; left: 987px; top: 207px; width: 32px; height: 120px; padding: 5px 0 0; border: 1px solid #ddd; background: #fff; box-shadow: 0 1px 3px #ccc; text-align: center; color: #555; }
.speed svg { margin-top: 5px; stroke-width: 1; }
.bluehint { position: absolute; left: 1041px; top: 156px; width: 1px; height: 8px; background: #4275bd; }
.mark { position: absolute; left: 974px; top: 299px; width: 53px; height: 37px; border: 7px solid #fc3838; }
.arrow { position: absolute; left: 880px; top: 337px; stroke: none; }
.meter { position: absolute; left: 1352px; top: 238px; width: 14px; height: 42px; padding: 6px 5px 0; border-radius: 3px 0 0 3px; background: #444; display: flex; flex-direction: column; gap: 5px; }
.meter i { width: 4px; height: 13px; background: repeating-linear-gradient(#666 0 1px, #444 1px 2px); border-bottom: 1px solid #ffa62b; }
.meter i + i { border-color: #7be03e; }
.watermark { position: absolute; left: 1042px; top: 574px; }
.watermark svg { stroke: none; filter: drop-shadow(0 0 1px #aaa); opacity: .8; }
.wm { fill: #fff; stroke: #d3d3d3; stroke-width: .7; }
.wbai { font: bold 55px "Liberation Sans", sans-serif; stroke: #fff; stroke-width: 1.5; }
.wdu { font: 37px "Liberation Sans", sans-serif; fill: #dcdde0; stroke: #c9cacc; stroke-width: 1.5; }
.wjy { font: 900 42px "Noto Sans CJK SC", sans-serif; }
.wurl { font: 28px "Noto Sans", sans-serif; stroke-width: .4; }
```
